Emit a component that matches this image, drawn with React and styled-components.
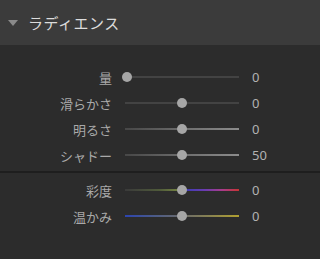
import React from 'react';
import styled, { createGlobalStyle } from 'styled-components';

const GlobalStyle = createGlobalStyle`
  html, body {
    margin: 0;
    padding: 0;
    background: #2c2c2c;
  }
  body {
    font-family: "Noto Sans CJK JP", "Noto Sans", sans-serif;
  }
`;

const Panel = styled.div`
  width: 100%;
  height: 259px;
  background: #2c2c2c;
  overflow: hidden;
`;

const Header = styled.div`
  height: 45px;
  background: #3b3b3b;
  display: flex;
  align-items: center;
  padding-left: 8px;
  gap: 10px;
  box-sizing: border-box;
`;

const Caret = styled.span`
  width: 0;
  height: 0;
  border-left: 5px solid transparent;
  border-right: 5px solid transparent;
  border-top: 6px solid #8a8a8a;
  margin-top: 1px;
`;

const Title = styled.span`
  color: #dcdcdc;
  font-size: 15px;
  letter-spacing: 0.5px;
`;

const Body = styled.div`
  padding-top: 19px;
`;

const Group = styled.div`
  display: flex;
  flex-direction: column;
`;

const Divider = styled.div`
  height: 2px;
  background: #1e1e1e;
  margin: 3px 0 4px;
`;

const Row = styled.div`
  height: 26px;
  display: grid;
  grid-template-columns: 112px 114px auto;
  column-gap: 13px;
  align-items: center;
`;

const Label = styled.span`
  text-align: right;
  color: #a9a9a9;
  font-size: 13px;
`;

const Track = styled.div`
  position: relative;
  height: 2px;
  background: ${p => p.bg};
`;

const Thumb = styled.span`
  position: absolute;
  top: 50%;
  width: 10px;
  height: 10px;
  border-radius: 50%;
  background: #a6a6a6;
  transform: translate(-50%, -50%);
`;

const Value = styled.span`
  color: #b2b2b2;
  font-size: 13px;
  font-family: "Noto Sans", sans-serif;
`;

const grey = '#434343';
const bright = 'linear-gradient(to right, #474747 0%, #6c6c6c 50%, #8c8c8c 100%)';
const sat = 'linear-gradient(to right, #3a3a3a 0%, #4f5a3a 30%, #7a8a44 50%, #3c3cb4 52%, #6a3cb0 70%, #a83c8c 85%, #c83434 100%)';
const warm = 'linear-gradient(to right, #2c44b0 0%, #4a5a8a 25%, #6a6a6a 50%, #8a8450 75%, #b0a030 100%)';

const tone = [
  { label: '量', pos: 2, value: '0', bg: grey },
  { label: '滑らかさ', pos: 50, value: '0', bg: grey },
  { label: '明るさ', pos: 50, value: '0', bg: bright },
  { label: 'シャドー', pos: 50, value: '50', bg: bright },
];

const color = [
  { label: '彩度', pos: 50, value: '0', bg: sat },
  { label: '温かみ', pos: 50, value: '0', bg: warm },
];

const Slider = ({ label, pos, value, bg }) => (
  <Row>
    <Label>{label}</Label>
    <Track bg={bg}>
      <Thumb style={{ left: `${pos}%` }} />
    </Track>
    <Value>{value}</Value>
  </Row>
);

export default function App() {
  return (
    <>
      <GlobalStyle />
      <Panel>
        <Header>
          <Caret />
          <Title>ラディエンス</Title>
        </Header>
        <Body>
          <Group>
            {tone.map(s => <Slider key={s.label} {...s} />)}
          </Group>
          <Divider />
          <Group>
            {color.map(s => <Slider key={s.label} {...s} />)}
          </Group>
        </Body>
      </Panel>
    </>
  );
}
